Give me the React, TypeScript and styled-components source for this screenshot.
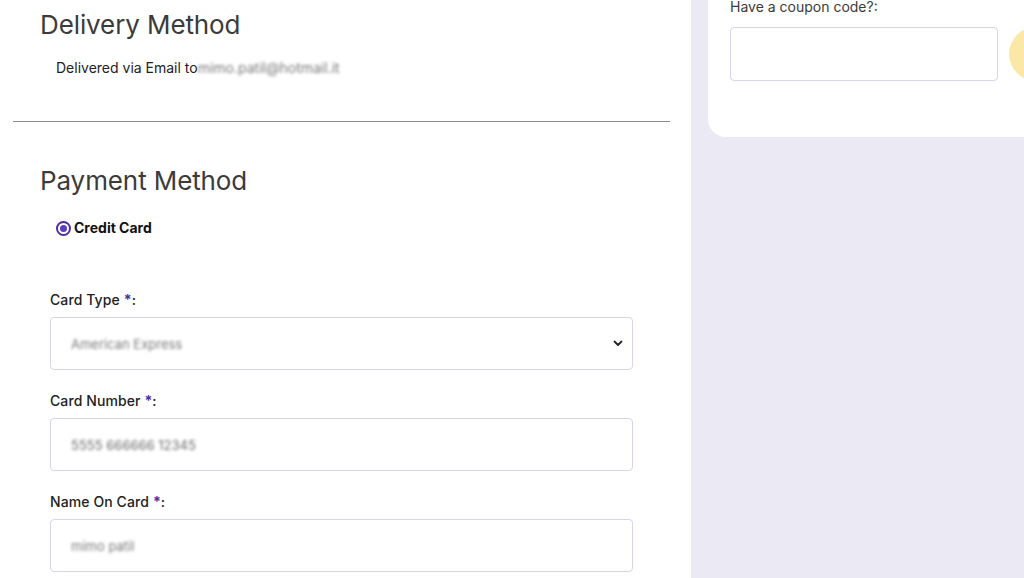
import React from "react";
import styled, { createGlobalStyle } from "styled-components";

const Global = createGlobalStyle`
  html, body { margin: 0; padding: 0; background: #ffffff; }
  body { font-family: Inter, "Noto Sans", "Liberation Sans", sans-serif; color: #222; }
  * { box-sizing: border-box; }
`;

const Page = styled.div`
  display: grid;
  grid-template-columns: 691px 1fr;
  width: 1024px;
  height: 578px;
  overflow: hidden;
`;

const Main = styled.div`
  background: #ffffff;
  padding: 0 21px 0 13px;
  display: flex;
  flex-direction: column;
`;

const Section = styled.div`
  padding: 0 27px;
  display: flex;
  flex-direction: column;
`;

const Heading = styled.h2<{ $top: number }>`
  margin: ${(p) => p.$top}px 0 0;
  font-size: 26px;
  line-height: 32px;
  font-weight: 400;
  color: #3b3b3b;
  letter-spacing: -0.1px;
`;

const Delivered = styled.p`
  margin: 17px 0 0 16px;
  font-size: 14px;
  line-height: 20px;
  color: #222;
  display: flex;
  align-items: center;
`;

const Blur = styled.span<{ $color?: string }>`
  filter: blur(1.4px);
  color: ${(p) => p.$color || "#7a7a7a"};
`;

const Divider = styled.hr`
  margin: 43px 0 0;
  border: none;
  border-top: 1px solid #8c8c8c;
  width: 100%;
`;

const RadioRow = styled.label`
  margin: 21px 0 0 16px;
  display: flex;
  align-items: center;
  gap: 3px;
  font-size: 14px;
  line-height: 20px;
  font-weight: 700;
  color: #111;
`;

const RadioDot = styled.span`
  width: 15px;
  height: 15px;
  border-radius: 50%;
  border: 2px solid #4b2f9c;
  display: inline-flex;
  align-items: center;
  justify-content: center;
  &::after {
    content: "";
    width: 7px;
    height: 7px;
    border-radius: 50%;
    background: #5a3fc0;
  }
`;

const Fields = styled.div`
  margin: 52px 0 0 37px;
  width: 583px;
  display: flex;
  flex-direction: column;
`;

const Field = styled.div<{ $first?: boolean }>`
  display: flex;
  flex-direction: column;
  gap: 7px;
  margin-top: ${(p) => (p.$first ? 0 : 21)}px;
`;

const Label = styled.div`
  font-size: 14px;
  line-height: 20px;
  font-weight: 500;
  color: #222;
  letter-spacing: 0.1px;
`;

const Star = styled.span`
  color: #4b2f9c;
  font-weight: 700;
`;

const Box = styled.div`
  height: 53px;
  border: 1px solid #d8d3ee;
  border-radius: 4px;
  background: #fff;
  display: flex;
  align-items: center;
  justify-content: space-between;
  padding: 0 9px 0 20px;
  font-size: 13px;
`;

const Side = styled.div`
  background: #ebeaf4;
  padding-left: 17px;
`;

const Card = styled.div`
  background: #ffffff;
  height: 137px;
  border-bottom-left-radius: 18px;
  padding: 0 0 0 22px;
  display: flex;
  flex-direction: column;
`;

const CouponLabel = styled.div`
  font-size: 14px;
  line-height: 16px;
  margin-top: -1px;
  color: #3b3b3b;
`;

const CouponRow = styled.div`
  margin-top: 12px;
  display: flex;
  align-items: center;
  gap: 11px;
`;

const CouponInput = styled.div`
  width: 268px;
  height: 54px;
  border: 1px solid #d8d3ee;
  border-radius: 4px;
  background: #fff;
  flex-shrink: 0;
`;

const ApplyCircle = styled.div`
  width: 54px;
  height: 54px;
  border-radius: 50%;
  background: #fbe8a6;
  flex-shrink: 0;
`;

const Chevron = () => (
  <svg width="10" height="7" viewBox="0 0 10 7" fill="none">
    <path d="M1.5 1.5 L5 5 L8.5 1.5" stroke="#222" strokeWidth="1.8" strokeLinecap="round" strokeLinejoin="round" />
  </svg>
);

export default function App() {
  return (
    <Page>
      <Global />
      <Main>
        <Section>
          <Heading $top={9}>Delivery Method</Heading>
          <Delivered>
            Delivered via Email to<Blur>mimo.patil@hotmail.it</Blur>
          </Delivered>
        </Section>
        <Divider />
        <Section>
          <Heading $top={43}>Payment Method</Heading>
          <RadioRow>
            <RadioDot />
            Credit Card
          </RadioRow>
        </Section>
        <Fields>
          <Field $first>
            <Label>
              Card Type <Star>*</Star>:
            </Label>
            <Box>
              <Blur>American Express</Blur>
              <Chevron />
            </Box>
          </Field>
          <Field>
            <Label>
              Card Number <Star>*</Star>:
            </Label>
            <Box>
              <Blur $color="#6a6a6a">5555 666666 12345</Blur>
            </Box>
          </Field>
          <Field>
            <Label>
              Name On Card <Star>*</Star>:
            </Label>
            <Box>
              <Blur>mimo patil</Blur>
            </Box>
          </Field>
        </Fields>
      </Main>
      <Side>
        <Card>
          <CouponLabel>Have a coupon code?:</CouponLabel>
          <CouponRow>
            <CouponInput />
            <ApplyCircle />
          </CouponRow>
        </Card>
      </Side>
    </Page>
  );
}
